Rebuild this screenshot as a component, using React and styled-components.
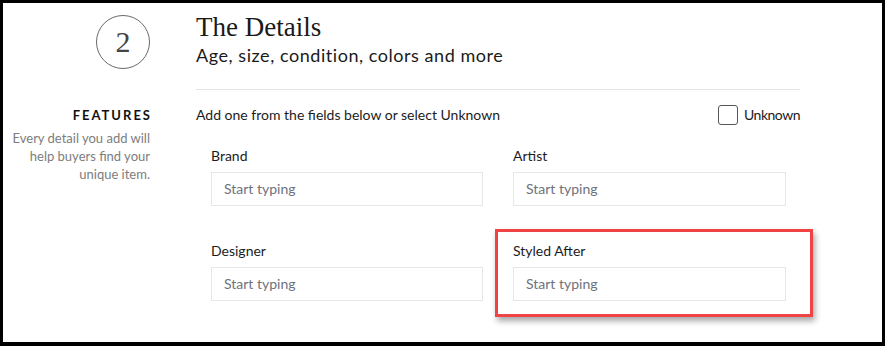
import React from "react";
import styled, { createGlobalStyle } from "styled-components";

const Global = createGlobalStyle`
  html, body { margin: 0; padding: 0; background: #000; }
  * { box-sizing: border-box; }
`;

const Frame = styled.div`
  width: 885px;
  height: 346px;
  border-style: solid;
  border-color: #000;
  border-width: 3px 3px 4px 3px;
  background: #fff;
  display: grid;
  grid-template-columns: 147px 604px;
  grid-template-rows: auto 1fr;
  column-gap: 46px;
  font-family: Lato, "Noto Sans", sans-serif;
  color: #1c1c1c;
  overflow: hidden;
`;

const StepCircle = styled.div`
  justify-self: end;
  margin-top: 12px;
  width: 54px;
  height: 54px;
  border: 1px solid #6a6a6a;
  border-radius: 50%;
  display: flex;
  align-items: center;
  justify-content: center;
  font-family: "Liberation Serif", "DejaVu Serif", serif;
  font-size: 30px;
  color: #444;
  line-height: 1;
  padding-bottom: 1px;
`;

const Header = styled.div`
  padding-top: 7.5px;
`;

const Title = styled.h1`
  margin: 0;
  font-family: "Liberation Serif", "DejaVu Serif", serif;
  font-weight: 400;
  font-size: 27px;
  line-height: 32px;
  color: #1a1a1a;
`;

const Subtitle = styled.div`
  font-size: 18px;
  line-height: 24px;
  letter-spacing: 0.55px;
  color: #1a1a1a;
`;

const Divider = styled.hr`
  margin: 22px 0 0 0;
  border: none;
  border-top: 1px solid #e4e4e4;
  height: 0;
`;

const Aside = styled.div`
  padding-top: 15px;
  text-align: right;
`;

const AsideTitle = styled.div`
  font-size: 13px;
  font-weight: 700;
  letter-spacing: 2px;
  margin-right: -2px;
  line-height: 20px;
  color: #111;
`;

const AsideText = styled.p`
  margin: 4px 0 0 0;
  font-size: 13px;
  line-height: 18px;
  color: #7d7d7d;
`;

const Form = styled.div`
  padding-top: 15px;
`;

const AddRow = styled.div`
  display: flex;
  align-items: center;
  justify-content: space-between;
  height: 20px;
  font-size: 14px;
`;

const CheckLabel = styled.label`
  display: flex;
  align-items: center;
  gap: 6px;
  font-size: 14px;
  letter-spacing: -0.5px;
  color: #1c1c1c;
`;

const Check = styled.input.attrs({ type: "checkbox" })`
  appearance: none;
  margin: 0;
  width: 20px;
  height: 20px;
  border: 1.5px solid #555;
  border-radius: 3px;
  background: #fff;
`;

const FieldGrid = styled.div`
  margin: 21px 14px 0 15px;
  display: grid;
  grid-template-columns: 272px 273px;
  column-gap: 30px;
  row-gap: 35px;
`;

const Field = styled.div`
  position: relative;
  display: flex;
  flex-direction: column;
  gap: 6px;
`;

const Label = styled.div`
  font-size: 14px;
  line-height: 20px;
  color: #1c1c1c;
`;

const Input = styled.input`
  height: 34px;
  border: 1px solid #e6e6e6;
  padding: 0 12px;
  font-family: Lato, "Noto Sans", sans-serif;
  font-size: 14px;
  color: #222;
  outline: none;
  &::placeholder { color: #6e727c; }
`;

const Highlight = styled.div`
  position: absolute;
  left: -18px;
  top: -12px;
  right: -27px;
  bottom: -16px;
  border: 3px solid #f04444;
  box-shadow: 2px 4px 6px rgba(0, 0, 0, 0.35);
  pointer-events: none;
`;

const fields = [
  { label: "Brand" },
  { label: "Artist" },
  { label: "Designer" },
  { label: "Styled After", highlight: true },
];

export default function App() {
  return (
    <>
      <Global />
      <Frame>
        <StepCircle>2</StepCircle>
        <Header>
          <Title>The Details</Title>
          <Subtitle>Age, size, condition, colors and more</Subtitle>
          <Divider />
        </Header>
        <Aside>
          <AsideTitle>FEATURES</AsideTitle>
          <AsideText>
            Every detail you add will
            <br />
            help buyers find your
            <br />
            unique item.
          </AsideText>
        </Aside>
        <Form>
          <AddRow>
            <span>Add one from the fields below or select Unknown</span>
            <CheckLabel>
              <Check />
              Unknown
            </CheckLabel>
          </AddRow>
          <FieldGrid>
            {fields.map((f) => (
              <Field key={f.label}>
                <Label>{f.label}</Label>
                <Input placeholder="Start typing" />
                {f.highlight && <Highlight />}
              </Field>
            ))}
          </FieldGrid>
        </Form>
      </Frame>
    </>
  );
}
